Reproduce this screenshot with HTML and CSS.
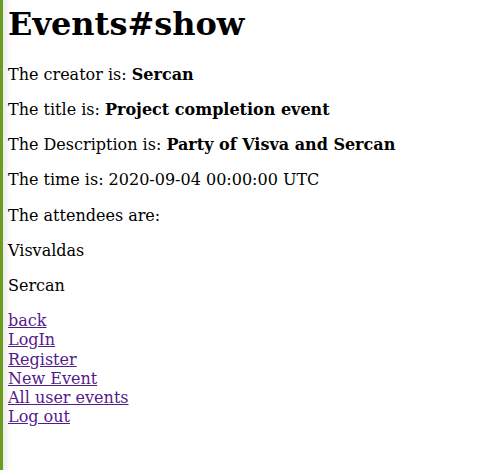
FILE: index.html
```html
<!DOCTYPE html>
<html>
<head>
<meta charset="utf-8">
<title>Events#show</title>
<link rel="stylesheet" href="styles.css">
</head>
<body class="page">
<h1 class="title">Events#show</h1>
<p class="line">The creator is: <strong>Sercan</strong></p>
<p class="line">The title is: <strong>Project completion event</strong></p>
<p class="line">The Description is: <strong>Party of Visva and Sercan</strong></p>
<p class="line">The time is: 2020-09-04 00:00:00 UTC</p>
<p class="line">The attendees are:</p>
<p class="line">Visvaldas</p>
<p class="line">Sercan</p>
<div class="links">
<a class="link" href="#">back</a>
<a class="link" href="#">LogIn</a>
<a class="link" href="#">Register</a>
<a class="link" href="#">New Event</a>
<a class="link" href="#">All user events</a>
<a class="link" href="#">Log out</a>
</div>
</body>
</html>
```
FILE: styles.css
```css
html {
  background: linear-gradient(to right, #6b9c1f 0, #6b9c1f 3px, #ebebeb 3px, #ffffff 11px);
  background-color: #fff;
}
.page {
  margin: 0;
  padding: 5px 8px 8px 8px;
  font-family: "DejaVu Serif", serif;
  font-size: 16px;
  line-height: 1.2;
  color: #000;
}
.title {
  font-size: 32px;
  font-weight: bold;
  margin: 0 0 21.44px 0;
}
.line {
  margin: 16px 0;
}
.links {
  display: flex;
  flex-direction: column;
  align-items: flex-start;
}
.link {
  color: #551a8b;
}
```
